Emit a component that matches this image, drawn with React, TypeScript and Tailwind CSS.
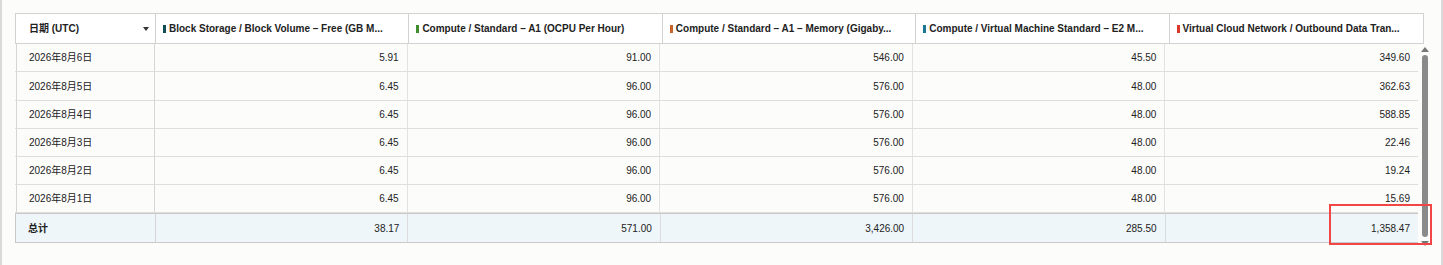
import React from "react";

const font = {
  fontFamily: '"Liberation Sans", "Noto Sans CJK SC", Arial, sans-serif',
};

const columns = [
  { label: "Block Storage / Block Volume – Free (GB M...", color: "bg-[#0f4c5a]" },
  { label: "Compute / Standard – A1 (OCPU Per Hour)", color: "bg-[#3f8d2f]" },
  { label: "Compute / Standard – A1 – Memory (Gigaby...", color: "bg-[#c9652c]" },
  { label: "Compute / Virtual Machine Standard – E2 M...", color: "bg-[#1b7893]" },
  { label: "Virtual Cloud Network / Outbound Data Tran...", color: "bg-[#d8382d]" },
];

const rows = [
  { date: "2026年8月6日", h: "h-[28px]", values: ["5.91", "91.00", "546.00", "45.50", "349.60"] },
  { date: "2026年8月5日", h: "h-[29px]", values: ["6.45", "96.00", "576.00", "48.00", "362.63"] },
  { date: "2026年8月4日", h: "h-[28px]", values: ["6.45", "96.00", "576.00", "48.00", "588.85"] },
  { date: "2026年8月3日", h: "h-[28px]", values: ["6.45", "96.00", "576.00", "48.00", "22.46"] },
  { date: "2026年8月2日", h: "h-[28px]", values: ["6.45", "96.00", "576.00", "48.00", "19.24"] },
  { date: "2026年8月1日", h: "h-[28px]", values: ["6.45", "96.00", "576.00", "48.00", "15.69"] },
];

const totals = ["38.17", "571.00", "3,426.00", "285.50", "1,358.47"];

const grid = "grid grid-cols-[140px_repeat(5,minmax(0,1fr))]";

const App = () => {
  return (
    <div
      className="w-[1443px] h-[265px] bg-[#fcfcfb] border-l-2 border-r-2 border-[#dadada] text-[10px] text-[#222]"
      style={font}
    >
      <div className="pt-[13px] pl-[13px] pr-[17px]">
        {/* header */}
        <div className={`${grid} h-[31px] bg-white border border-[#d2d2d2]`}>
          <div className="flex items-center justify-between pl-[13px] pr-[6px] border-r border-[#d2d2d2] font-bold">
            <span>日期 (UTC)</span>
            <span className="w-0 h-0 border-l-[3.5px] border-r-[3.5px] border-t-[4px] border-l-transparent border-r-transparent border-t-[#333]" />
          </div>
          {columns.map((c, i) => (
            <div
              key={c.label}
              className={`flex items-center gap-[3px] pl-[7px] font-bold whitespace-nowrap overflow-hidden ${
                i < columns.length - 1 ? "border-r border-[#d2d2d2]" : ""
              }`}
            >
              <span className={`shrink-0 w-[3px] h-[8px] ${c.color}`} />
              <span>{c.label}</span>
            </div>
          ))}
        </div>

        {/* body + scrollbar */}
        <div className="flex mr-[-7px]">
          <div className="flex-1 min-w-0">
            {rows.map((r) => (
              <div key={r.date} className={`${grid} ${r.h} border-b border-[#dedede]`}>
                <div className="flex items-center pl-[12px] ml-[1px] border-l border-r border-[#d6d6d6]">
                  {r.date}
                </div>
                {r.values.map((v, i) => (
                  <div
                    key={i}
                    className={`flex items-center justify-end pr-[8px] ${
                      i < 4 ? "border-r border-[#e2e2e2]" : ""
                    }`}
                  >
                    {v}
                  </div>
                ))}
              </div>
            ))}
            <div className={`${grid} h-[30px] bg-[#eef6f9] border-t border-b border-l border-[#c9c9c9]`}>
              <div className="flex items-center pl-[12px] border-r border-[#d6d6d6] font-bold">
                总计
              </div>
              {totals.map((v, i) => (
                <div
                  key={i}
                  className={`relative flex items-center justify-end pr-[8px] ${
                    i < 4 ? "border-r border-[#dcdcdc]" : ""
                  }`}
                >
                  {v}
                  {i === 4 && (
                    <span className="absolute right-[-14px] top-[-10px] w-[103px] h-[41px] border-2 border-[#f24646]" />
                  )}
                </div>
              ))}
            </div>
          </div>

          {/* scrollbar */}
          <div className="w-[13px] flex flex-col items-center pt-[3px]">
            <span className="w-0 h-0 border-l-[4px] border-r-[4px] border-b-[5px] border-l-transparent border-r-transparent border-b-[#777]" />
            <span className="mt-[3px] w-[6px] h-[182px] rounded-full bg-[#8a8a8a]" />
            <span className="mt-[4px] w-0 h-0 border-l-[4px] border-r-[4px] border-t-[5px] border-l-transparent border-r-transparent border-t-[#777]" />
          </div>
        </div>
      </div>
    </div>
  );
};

export default App;
